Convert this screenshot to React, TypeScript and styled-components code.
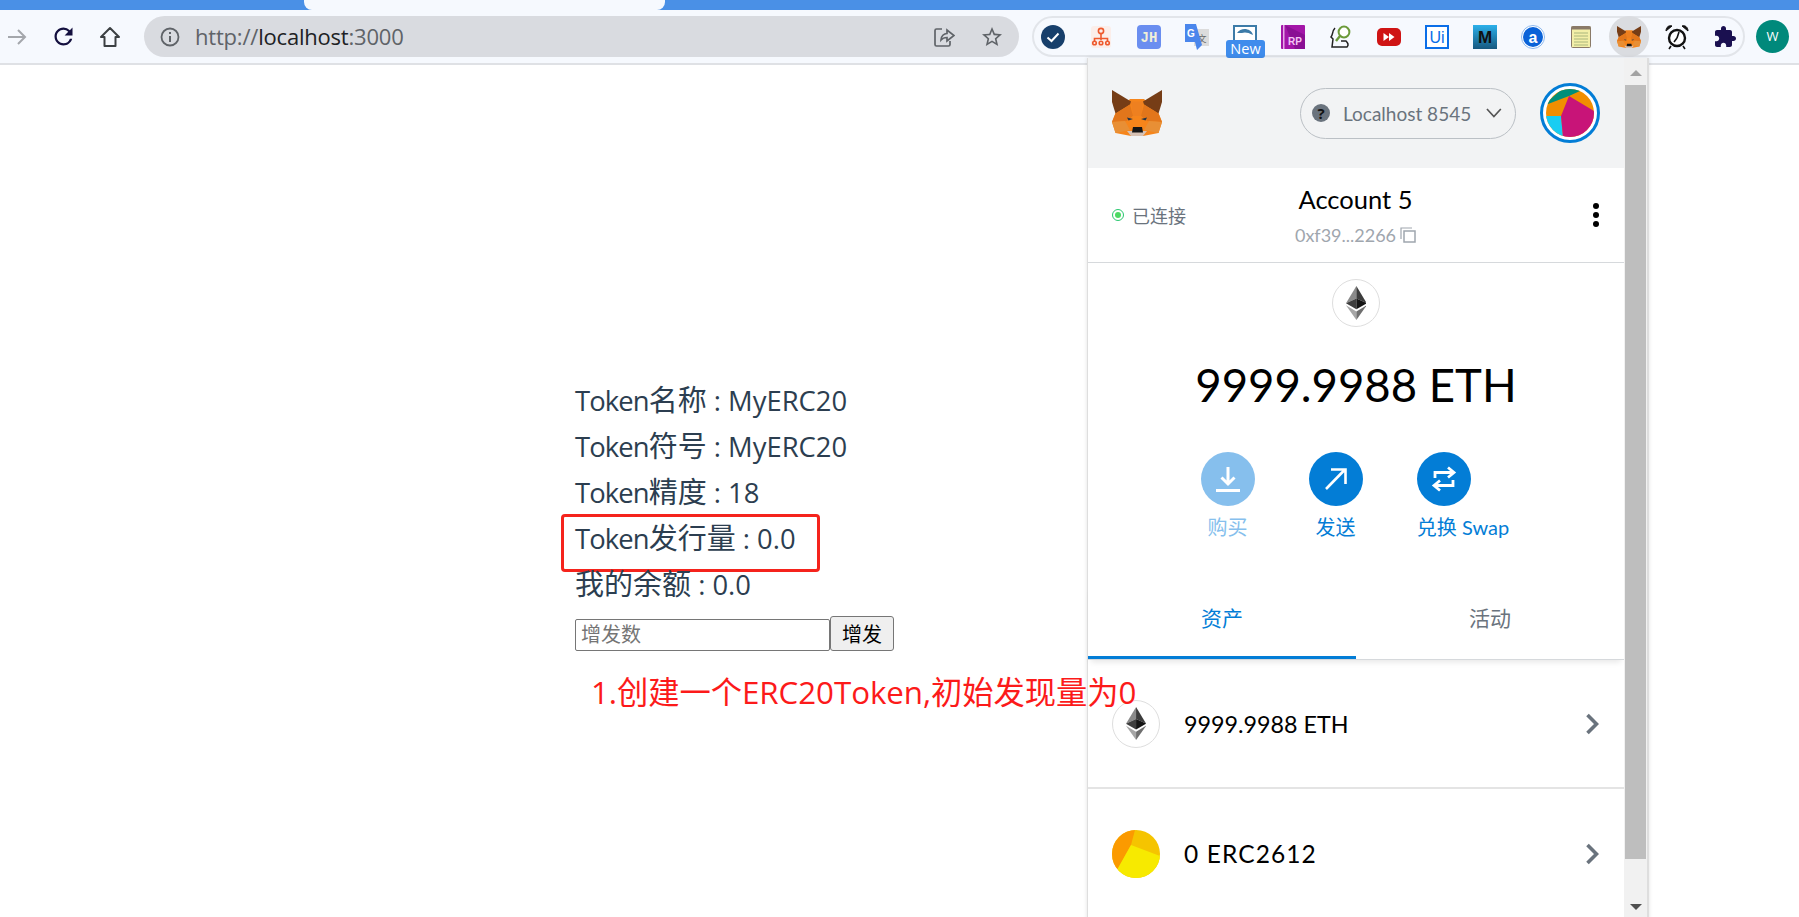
import React from "react";
import styled, { createGlobalStyle } from "styled-components";

const Global = createGlobalStyle`
  html, body { margin: 0; padding: 0; background: #fff; }
  body { width: 1799px; height: 917px; overflow: hidden; font-family: "Open Sans", "Noto Sans CJK SC", sans-serif; }
  * { box-sizing: border-box; }
`;

const cjk = `"Noto Sans CJK SC", sans-serif`;
const mmFont = `Lato, ${cjk}`;

const Page = styled.div`
  position: relative;
  width: 1799px;
  height: 917px;
  overflow: hidden;
  display: flex;
  flex-direction: column;
`;
const TabStrip = styled.div`
  height: 10px;
  background: #4a90e6;
  display: flex;
  padding-left: 304px;
  flex: none;
`;
const ActiveTab = styled.div`
  width: 361px;
  height: 10px;
  background: #f6f9fe;
  border-radius: 0 0 8px 8px;
`;
const Toolbar = styled.div`
  height: 55px;
  flex: none;
  background: #f6f9fe;
  border-bottom: 2px solid #dfe1e5;
  display: flex;
  align-items: flex-start;
  padding: 6px 0 0 0;
`;
const NavButton = styled.div<{ $w: number }>`
  width: ${(p) => p.$w}px;
  height: 41px;
  flex: none;
  display: flex;
  align-items: center;
  justify-content: center;
`;
const AddressBar = styled.div`
  width: 875px;
  height: 41px;
  margin-left: 17px;
  flex: none;
  background: #d9dbe0;
  border-radius: 21px;
  display: flex;
  align-items: center;
  padding: 0 15px 0 16px;
`;
const Url = styled.div`
  margin-left: 15px;
  padding-bottom: 2px;
  flex: 1;
  font: 22px "Open Sans", sans-serif;
  letter-spacing: -0.2px;
  color: #5f6368;
  b { font-weight: 400; color: #202124; }
`;
const BarIcon = styled.div<{ $ml?: number }>`
  margin-left: ${(p) => p.$ml ?? 0}px;
  display: flex;
`;
const ExtensionPill = styled.div`
  width: 713px;
  height: 41px;
  margin-left: 13px;
  flex: none;
  border: 2px solid #e2e5ea;
  border-radius: 21px;
  display: flex;
  align-items: center;
  gap: 24px;
  padding-left: 7px;
`;
const ExtSlot = styled.div<{ $active?: boolean }>`
  position: relative;
  width: 24px;
  height: 24px;
  flex: none;
  display: flex;
  align-items: center;
  justify-content: center;
  &::before {
    content: "";
    display: ${(p) => (p.$active ? "block" : "none")};
    position: absolute;
    left: -8px;
    top: -9px;
    width: 40px;
    height: 41px;
    border-radius: 50%;
    background: #dadce0;
  }
  svg { position: relative; }
`;
const NewBadge = styled.div`
  position: absolute;
  left: -7px;
  top: 15px;
  width: 39px;
  height: 18px;
  border-radius: 3px;
  background: #3f8cec;
  color: #fff;
  font: 14.5px/18px "Open Sans", sans-serif;
  text-align: center;
`;
const UserAvatar = styled.div`
  width: 33px;
  height: 33px;
  margin: 4px 0 0 11px;
  flex: none;
  border-radius: 50%;
  background: #00897b;
  color: #fff;
  font: 13px/33px "Open Sans", sans-serif;
  text-align: center;
`;

const Main = styled.main`
  flex: 1;
  padding: 312px 0 0 575px;
`;
const InfoLine = styled.div`
  position: relative;
  height: 46px;
  font: 27.4px/46px "Open Sans", ${cjk};
  color: #2c3e50;
  white-space: nowrap;
`;
const TokenWord = styled.span`
  letter-spacing: -0.9px;
`;
const Han = styled.span`
  font-size: 29px;
`;
const RedBox = styled.div`
  position: absolute;
  left: -14px;
  top: -1px;
  width: 259px;
  height: 58px;
  border: 3px solid #f5231c;
  border-radius: 4px;
`;
const FormRow = styled.div`
  display: flex;
  align-items: flex-end;
  margin-top: 9px;
  height: 35px;
`;
const MintInput = styled.input`
  width: 255px;
  height: 32px;
  padding: 0 5px 3px;
  border: 1px solid #767676;
  border-radius: 2px;
  background: #fff;
  font: 20px ${cjk};
  &::placeholder { color: #757575; opacity: 1; }
`;
const MintButton = styled.button`
  width: 64px;
  height: 35px;
  padding: 0;
  border: 1px solid #767676;
  border-radius: 3px;
  background: #efefef;
  color: #000;
  font: 20px ${cjk};
`;
const Annotation = styled.div`
  position: relative;
  z-index: 5;
  margin: 19px 0 0 16px;
  font: 31.3px/44px "Open Sans", ${cjk};
  letter-spacing: -0.05px;
  color: #fc1a1a;
  white-space: nowrap;
`;

const Popup = styled.aside`
  position: absolute;
  z-index: 3;
  left: 1087px;
  top: 58px;
  width: 562px;
  height: 862px;
  background: #fff;
  border-left: 1px solid #dedede;
  border-right: 2px solid #dedede;
  box-shadow: 0 0 4px rgba(0, 0, 0, 0.12);
  display: flex;
  font-family: ${mmFont};
`;
const PopupBody = styled.div`
  width: 536px;
  flex: none;
  display: flex;
  flex-direction: column;
`;
const Scrollbar = styled.div`
  flex: 1;
  background: #f1f1f1;
  display: flex;
  flex-direction: column;
  align-items: center;
  padding-top: 12px;
`;
const ScrollThumb = styled.div`
  width: 21px;
  height: 774px;
  margin: 9px 0 45px;
  background: #bebebe;
`;
const ScrollArrow = styled.div<{ $up?: boolean; $color: string }>`
  width: 0;
  height: 0;
  border-left: 6px solid transparent;
  border-right: 6px solid transparent;
  ${(p) => (p.$up ? `border-bottom: 6px solid ${p.$color};` : `border-top: 6px solid ${p.$color};`)}
`;
const AppHeader = styled.header`
  height: 110px;
  flex: none;
  background: #f2f3f4;
  display: flex;
  align-items: center;
  padding: 0 24px 0 24px;
`;
const NetworkPill = styled.div`
  width: 216px;
  height: 51px;
  margin: 0 24px 0 auto;
  border: 1px solid #bbc0c5;
  border-radius: 26px;
  display: flex;
  align-items: center;
  padding: 0 11px 0 11px;
  color: #6a737d;
  font-size: 19px;
  gap: 13px;
  span { flex: 1; white-space: nowrap; }
`;
const QuestionMark = styled.div`
  width: 18px;
  height: 18px;
  border-radius: 50%;
  background: #6a737d;
  color: #111;
  font: 700 15px/18px "Open Sans", sans-serif;
  text-align: center;
  flex: none;
`;
const IdenticonRing = styled.div`
  width: 60px;
  height: 60px;
  flex: none;
  border: 3px solid #037dd6;
  border-radius: 50%;
  padding: 3px;
  background: #fff;
  svg { display: block; border-radius: 50%; }
`;
const AccountBar = styled.div`
  height: 95px;
  flex: none;
  border-bottom: 1px solid #d6d9dc;
  display: grid;
  grid-template-columns: 1fr auto 1fr;
  align-items: center;
  padding: 0 25px 0 24px;
`;
const Connected = styled.div`
  display: flex;
  align-items: center;
  gap: 8px;
  margin-top: -1px;
  color: #6a737d;
  font: 18px ${cjk};
`;
const StatusDot = styled.div`
  width: 12px;
  height: 12px;
  border-radius: 50%;
  border: 1px solid #28c76f;
  padding: 2px;
  &::after {
    content: "";
    display: block;
    width: 6px;
    height: 6px;
    border-radius: 50%;
    background: #4cd964;
  }
`;
const AccountInfo = styled.div`
  text-align: center;
  margin-top: -1px;
`;
const AccountName = styled.div`
  font-size: 25.5px;
  line-height: 32px;
  color: #000;
`;
const AccountAddr = styled.div`
  margin-top: 9px;
  display: flex;
  align-items: center;
  justify-content: center;
  gap: 4px;
  font-size: 18px;
  color: #9fa6ae;
`;
const Kebab = styled.div`
  justify-self: end;
  display: flex;
  flex-direction: column;
  gap: 3px;
  i { display: block; width: 6px; height: 6px; border-radius: 50%; background: #000; }
`;
const Overview = styled.section`
  height: 321px;
  flex: none;
  display: flex;
  flex-direction: column;
  align-items: center;
  padding-top: 16px;
`;
const CoinBadge = styled.div<{ $plain?: boolean }>`
  width: 48px;
  height: 48px;
  flex: none;
  border-radius: 50%;
  border: ${(p) => (p.$plain ? "none" : "1px solid #dedede")};
  display: flex;
  align-items: center;
  justify-content: center;
  overflow: hidden;
  background: #fff;
`;
const Balance = styled.div`
  margin-top: 30px;
  font-size: 45.5px;
  line-height: 56px;
  color: #000;
  white-space: nowrap;
`;
const Actions = styled.div`
  display: grid;
  grid-template-columns: repeat(3, 54px);
  column-gap: 54px;
  margin: 39px 0 0 -41px;
`;
const Action = styled.div<{ $dim?: boolean }>`
  width: 54px;
  display: flex;
  flex-direction: column;
  align-items: center;
  color: ${(p) => (p.$dim ? "#86bfed" : "#037dd6")};
  font-size: 20px;
  white-space: nowrap;
`;
const ActionCircle = styled.div<{ $dim?: boolean }>`
  width: 54px;
  height: 54px;
  border-radius: 50%;
  background: ${(p) => (p.$dim ? "#86bfed" : "#037dd6")};
  display: flex;
  align-items: center;
  justify-content: center;
`;
const ActionLabel = styled.div<{ $wide?: boolean }>`
  margin-top: 8px;
  line-height: 26px;
  ${(p) => (p.$wide ? "margin-left: 39px;" : "")}
`;
const Tabs = styled.nav`
  height: 76px;
  flex: none;
  display: flex;
  border-bottom: 1px solid #d6d9dc;
  box-shadow: 0 5px 6px -3px rgba(0, 0, 0, 0.1);
`;
const TabItem = styled.div<{ $on?: boolean }>`
  flex: 1;
  height: 75px;
  text-align: center;
  font: 21px/66px ${cjk};
  color: ${(p) => (p.$on ? "#037dd6" : "#6a737d")};
  border-bottom: 3px solid ${(p) => (p.$on ? "#037dd6" : "transparent")};
`;
const AssetRow = styled.div<{ $last?: boolean }>`
  height: 129px;
  flex: none;
  display: flex;
  align-items: center;
  padding: 0 25px 0 24px;
  border-bottom: ${(p) => (p.$last ? "none" : "2px solid #e4e4e4")};
  color: #000;
`;
const AssetLabel = styled.div<{ $wide?: boolean }>`
  margin-left: 24px;
  flex: 1;
  white-space: nowrap;
  font-size: ${(p) => (p.$wide ? "24.5px" : "23.3px")};
  letter-spacing: ${(p) => (p.$wide ? "1.1px" : "0")};
`;

const Fox = ({ w, h }: { w: number; h: number }) => (
  <svg width={w} height={h} viewBox="0 0 100 92">
    <polygon points="7,46 36,18 64,18 93,46 100,64 93,86 62,92 38,92 7,86 0,64" fill="#f6851b" />
    <polygon points="0,0 38,23 36,29 7,47 0,24" fill="#763d16" />
    <polygon points="100,0 62,23 64,29 93,47 100,24" fill="#763d16" />
    <polygon points="38,23 62,23 58,52 42,52" fill="#ee8020" />
    <polygon points="7,47 36,29 42,52 30,62 0,64" fill="#e2761b" />
    <polygon points="93,47 64,29 58,52 70,62 100,64" fill="#e2761b" />
    <polygon points="0,64 26,62 36,80 7,86" fill="#e88f35" />
    <polygon points="100,64 74,62 64,80 93,86" fill="#e88f35" />
    <polygon points="30,62 42,52 58,52 70,62 62,76 38,76" fill="#f6851b" />
    <polygon points="30,82 70,82 62,92 38,92" fill="#d7c1b3" />
    <polygon points="42,74 60,74 62,85 40,85" fill="#161616" />
    <polygon points="30,55 42,58 33,61" fill="#233447" />
    <polygon points="70,55 58,58 67,61" fill="#233447" />
  </svg>
);

const Eth = ({ h }: { h: number }) => (
  <svg width={(h * 22) / 36} height={h} viewBox="0 0 22 36">
    <polygon points="11,0 0,18.2 11,13.2" fill="#8a8a8a" />
    <polygon points="11,0 22,18.2 11,13.2" fill="#3c3c3c" />
    <polygon points="0,18.2 11,13.2 11,24.6" fill="#3e3e3e" />
    <polygon points="22,18.2 11,13.2 11,24.6" fill="#141414" />
    <polygon points="0,20.4 11,36 11,27" fill="#a6a6a6" />
    <polygon points="22,20.4 11,36 11,27" fill="#6f6f6f" />
  </svg>
);

const Chevron = () => (
  <svg width="14" height="22" viewBox="0 0 14 22">
    <path d="M2.5 2 L11.5 11 L2.5 20" fill="none" stroke="#6a737d" strokeWidth="3.6" />
  </svg>
);

const Check = () => (
  <svg width="24" height="24" viewBox="0 0 24 24">
    <circle cx="12" cy="12" r="12" fill="#173f6b" />
    <path d="M6.5 12.5 L10.5 16 L17.5 8.5" fill="none" stroke="#fff" strokeWidth="2" />
  </svg>
);
const OrgChart = () => (
  <svg width="24" height="24" viewBox="0 0 24 24">
    <rect x="2" y="1" width="20" height="22" rx="3" fill="#fbeeea" />
    <g fill="none" stroke="#ee5a2e" strokeWidth="1.6">
      <circle cx="12" cy="6" r="2.6" />
      <path d="M12 9 V15 M5.5 16 V13.5 H18.5 V16" />
      <circle cx="5.5" cy="18" r="1.8" />
      <circle cx="12" cy="18" r="1.8" />
      <circle cx="18.5" cy="18" r="1.8" />
    </g>
  </svg>
);
const JH = () => (
  <svg width="24" height="24" viewBox="0 0 24 24">
    <rect width="24" height="24" rx="4" fill="#6a8ef0" />
    <text x="12" y="17" textAnchor="middle" fontFamily="Liberation Mono" fontWeight="700" fontSize="14" fill="#f0f0d8">JH</text>
  </svg>
);
const Translate = () => (
  <svg width="24" height="26" viewBox="0 0 24 26">
    <rect x="9" y="5" width="15" height="17" fill="#dcdcdc" />
    <text x="17" y="18" textAnchor="middle" fontFamily="Noto Sans CJK SC" fontSize="9" fill="#666">文</text>
    <polygon points="0,0 11,0 17,21 12,26 10,18 0,18" fill="#4a86ec" />
    <text x="6" y="13" textAnchor="middle" fontFamily="Liberation Sans" fontWeight="700" fontSize="10" fill="#fff">G</text>
  </svg>
);
const Snag = () => (
  <svg width="24" height="24" viewBox="0 0 24 24">
    <rect width="24" height="24" fill="#3c7ba8" />
    <rect x="2" y="2" width="20" height="20" fill="#fff" />
    <path d="M4 8 C8 2 18 3 20 10 C15 7 11 7 9 8 Z" fill="#3c7ba8" />
  </svg>
);
const RP = () => (
  <svg width="24" height="24" viewBox="0 0 24 24">
    <rect width="24" height="24" rx="1" fill="#a316a8" />
    <rect x="2" width="1.5" height="24" fill="#e6a8e8" />
    <polygon points="4,0 24,10 24,24 14,24" fill="#8a1094" />
    <text x="14" y="20" textAnchor="middle" fontFamily="Liberation Sans" fontWeight="700" fontSize="10" fill="#f5c4f5">RP</text>
  </svg>
);
const Magnifier = () => (
  <svg width="24" height="24" viewBox="0 0 24 24">
    <path d="M6 3 C3 6 4 10 2 12 L4 14 L3 22 H18 C20 20 19 18 17 16 L12 16" fill="none" stroke="#222" strokeWidth="1.5" />
    <circle cx="15" cy="7" r="5.4" fill="#fff" stroke="#6b9a3a" strokeWidth="2" />
    <path d="M11 11 L7 16" stroke="#6b9a3a" strokeWidth="2.4" />
  </svg>
);
const RedPlay = () => (
  <svg width="24" height="24" viewBox="0 0 24 24">
    <rect y="3" width="24" height="18" rx="5" fill="#cf1414" />
    <polygon points="6.5,8 12,12 6.5,16" fill="#fff" />
    <polygon points="12,8 17.5,12 12,16" fill="#fff" />
  </svg>
);
const UiPath = () => (
  <svg width="24" height="24" viewBox="0 0 24 24">
    <rect x="1" y="1" width="22" height="22" fill="#fff" stroke="#0a6ee8" strokeWidth="2" />
    <text x="12" y="18" textAnchor="middle" fontFamily="Liberation Sans" fontSize="16" fill="#0a6ee8">Ui</text>
  </svg>
);
const MBox = () => (
  <svg width="24" height="24" viewBox="0 0 24 24">
    <defs>
      <linearGradient id="mg" x1="0" y1="0" x2="0" y2="1">
        <stop offset="0" stopColor="#2bb0ea" />
        <stop offset="1" stopColor="#17587f" />
      </linearGradient>
    </defs>
    <rect width="24" height="24" fill="url(#mg)" />
    <text x="12" y="18" textAnchor="middle" fontFamily="Liberation Sans" fontWeight="700" fontSize="17" fill="#111">M</text>
  </svg>
);
const ACircle = () => (
  <svg width="24" height="24" viewBox="0 0 24 24">
    <circle cx="12" cy="12" r="11.5" fill="#fff" stroke="#8cb8ee" strokeWidth="1" />
    <circle cx="12" cy="12" r="10" fill="#0a62d8" />
    <text x="12" y="17.5" textAnchor="middle" fontFamily="Liberation Sans" fontWeight="700" fontSize="16" fill="#fff">a</text>
  </svg>
);
const Notepad = () => (
  <svg width="20" height="22" viewBox="0 0 20 22">
    <rect x="0.5" y="0.5" width="19" height="21" rx="1" fill="#f3efa8" stroke="#8a7a68" />
    <rect x="0.5" y="0.5" width="19" height="3" fill="#8a7a68" />
    <path d="M3 7 H17 M3 10 H17 M3 13 H17 M3 16 H17 M3 19 H17" stroke="#a9b67d" strokeWidth="1" />
  </svg>
);
const Alarm = () => (
  <svg width="24" height="26" viewBox="0 0 24 26">
    <circle cx="12" cy="14" r="8" fill="#fff" stroke="#111" strokeWidth="2.4" />
    <path d="M1 7 C1 3 4 1 7 2 Z M23 7 C23 3 20 1 17 2 Z" fill="#111" stroke="#111" />
    <path d="M12 14 L14 8 M12 14 L9 18 M6 22 L4 25 M18 22 L20 25" stroke="#111" strokeWidth="1.6" />
  </svg>
);
const Puzzle = () => (
  <svg width="24" height="24" viewBox="0 0 24 24">
    <path
      fill="#1a1050"
      d="M20.5 11H19V7c0-1.1-.9-2-2-2h-4V3.5C13 2.12 11.88 1 10.5 1S8 2.12 8 3.5V5H4c-1.1 0-1.99.9-1.99 2v3.8H3.5c1.49 0 2.7 1.21 2.7 2.7s-1.21 2.7-2.7 2.7H2V20c0 1.1.9 2 2 2h3.8v-1.5c0-1.49 1.21-2.7 2.7-2.7 1.49 0 2.7 1.21 2.7 2.7V22H17c1.1 0 2-.9 2-2v-4h1.5c1.38 0 2.5-1.12 2.5-2.5S21.88 11 20.5 11z"
    />
  </svg>
);

export default function App() {
  return (
    <Page>
      <Global />
      <TabStrip>
        <ActiveTab />
      </TabStrip>
      <Toolbar>
        <NavButton $w={33}>
          <svg width="22" height="22" viewBox="0 0 22 22">
            <path d="M2 11 H19 M12 4 L19 11 L12 18" fill="none" stroke="#a4a7ac" strokeWidth="2" />
          </svg>
        </NavButton>
        <NavButton $w={60}>
          <svg width="27" height="27" viewBox="0 0 24 24">
            <path
              fill="#14103f"
              d="M17.65 6.35A7.958 7.958 0 0 0 12 4c-4.42 0-7.99 3.58-7.99 8s3.57 8 7.99 8c3.73 0 6.84-2.55 7.73-6h-2.08A5.99 5.99 0 0 1 12 18c-3.31 0-6-2.69-6-6s2.69-6 6-6c1.66 0 3.14.69 4.22 1.78L13 11h7V4l-2.35 2.35z"
            />
          </svg>
        </NavButton>
        <NavButton $w={34}>
          <svg width="24" height="24" viewBox="0 0 24 24">
            <path d="M12 3 L3 12 H6.5 V21 H17.5 V12 H21 Z" fill="none" stroke="#3c4043" strokeWidth="2" strokeLinejoin="round" />
          </svg>
        </NavButton>
        <AddressBar>
          <svg width="20" height="20" viewBox="0 0 20 20">
            <circle cx="10" cy="10" r="8.5" fill="none" stroke="#5f6368" strokeWidth="1.8" />
            <path d="M10 9 V15 M10 5 V7" stroke="#5f6368" strokeWidth="2" />
          </svg>
          <Url>
            http://<b>localhost</b>:3000
          </Url>
          <BarIcon>
            <svg width="22" height="22" viewBox="0 0 22 22">
              <path
                d="M9 3 H3.5 A1.5 1.5 0 0 0 2 4.5 V18.5 A1.5 1.5 0 0 0 3.5 20 H15.5 A1.5 1.5 0 0 0 17 18.5 V15 M8 14 C8 10 11 7.5 14 7.5 V4 L21 9.5 L14 15 V11.5 C11.5 11.5 9.5 12.2 8 14 Z"
                fill="none"
                stroke="#5f6368"
                strokeWidth="1.7"
              />
            </svg>
          </BarIcon>
          <BarIcon $ml={25}>
            <svg width="24" height="24" viewBox="0 0 24 24">
              <path
                fill="#5f6368"
                d="M22 9.24l-7.19-.62L12 2 9.19 8.63 2 9.24l5.46 4.73L5.82 21 12 17.27 18.18 21l-1.63-7.03L22 9.24zM12 15.4l-3.76 2.27 1-4.28-3.32-2.88 4.38-.38L12 6.1l1.71 4.04 4.38.38-3.32 2.88 1 4.28L12 15.4z"
              />
            </svg>
          </BarIcon>
        </AddressBar>
        <ExtensionPill>
          <ExtSlot><Check /></ExtSlot>
          <ExtSlot><OrgChart /></ExtSlot>
          <ExtSlot><JH /></ExtSlot>
          <ExtSlot><Translate /></ExtSlot>
          <ExtSlot>
            <Snag />
            <NewBadge>New</NewBadge>
          </ExtSlot>
          <ExtSlot><RP /></ExtSlot>
          <ExtSlot><Magnifier /></ExtSlot>
          <ExtSlot><RedPlay /></ExtSlot>
          <ExtSlot><UiPath /></ExtSlot>
          <ExtSlot><MBox /></ExtSlot>
          <ExtSlot><ACircle /></ExtSlot>
          <ExtSlot><Notepad /></ExtSlot>
          <ExtSlot $active><Fox w={26} h={24} /></ExtSlot>
          <ExtSlot><Alarm /></ExtSlot>
          <ExtSlot><Puzzle /></ExtSlot>
        </ExtensionPill>
        <UserAvatar>W</UserAvatar>
      </Toolbar>

      <Main>
        <InfoLine><TokenWord>Token</TokenWord><Han>名称</Han> : MyERC20</InfoLine>
        <InfoLine><TokenWord>Token</TokenWord><Han>符号</Han> : MyERC20</InfoLine>
        <InfoLine><TokenWord>Token</TokenWord><Han>精度</Han> : 18</InfoLine>
        <InfoLine>
          <TokenWord>Token</TokenWord><Han>发行量</Han> : 0.0
          <RedBox />
        </InfoLine>
        <InfoLine><Han>我的余额</Han> : 0.0</InfoLine>
        <FormRow>
          <MintInput placeholder="增发数" />
          <MintButton>增发</MintButton>
        </FormRow>
        <Annotation>1.创建一个ERC20Token,初始发现量为0</Annotation>
      </Main>

      <Popup>
        <PopupBody>
          <AppHeader>
            <Fox w={50} h={46} />
            <NetworkPill>
              <QuestionMark>?</QuestionMark>
              <span>Localhost 8545</span>
              <svg width="20" height="12" viewBox="0 0 20 12">
                <path d="M3 2 L10 9.5 L17 2" fill="none" stroke="#555" strokeWidth="1.7" />
              </svg>
            </NetworkPill>
            <IdenticonRing>
              <svg width="48" height="48" viewBox="0 0 48 48">
                <rect width="48" height="48" fill="#f18e00" />
                <polygon points="0,14 16,0 36,0 34,2 23,7 2,15" fill="#008f7a" />
                <polygon points="0,27 15,27 17,48 0,48" fill="#18cdf2" />
                <polygon points="23,7 48,22 48,48 17,48 15,27" fill="#c81478" />
              </svg>
            </IdenticonRing>
          </AppHeader>
          <AccountBar>
            <Connected>
              <StatusDot />
              已连接
            </Connected>
            <AccountInfo>
              <AccountName>Account 5</AccountName>
              <AccountAddr>
                0xf39...2266
                <svg width="16" height="16" viewBox="0 0 16 16">
                  <path d="M1 12 V1 H12" fill="none" stroke="#9fa6ae" strokeWidth="1.2" />
                  <rect x="4" y="4" width="11" height="11" fill="none" stroke="#9fa6ae" strokeWidth="1.5" />
                </svg>
              </AccountAddr>
            </AccountInfo>
            <Kebab>
              <i />
              <i />
              <i />
            </Kebab>
          </AccountBar>
          <Overview>
            <CoinBadge>
              <Eth h={34} />
            </CoinBadge>
            <Balance>9999.9988 ETH</Balance>
            <Actions>
              <Action $dim>
                <ActionCircle $dim>
                  <svg width="28" height="28" viewBox="0 0 28 28">
                    <path d="M14 2 V19 M7.5 12.5 L14 19 L20.5 12.5 M2 25.5 H26" fill="none" stroke="#fff" strokeWidth="3" />
                  </svg>
                </ActionCircle>
                <ActionLabel>购买</ActionLabel>
              </Action>
              <Action>
                <ActionCircle>
                  <svg width="24" height="24" viewBox="0 0 24 24">
                    <path d="M2 22 L21 2.5 M7 2.5 H21.5 V17" fill="none" stroke="#fff" strokeWidth="2.6" />
                  </svg>
                </ActionCircle>
                <ActionLabel>发送</ActionLabel>
              </Action>
              <Action>
                <ActionCircle>
                  <svg width="26" height="26" viewBox="0 0 26 26">
                    <path d="M4 12 V6.5 H22 M17 1.5 L23 6.5 L17 11.5 M22 14 V19.5 H4 M9 14.5 L3 19.5 L9 24.5" fill="none" stroke="#fff" strokeWidth="2.8" />
                  </svg>
                </ActionCircle>
                <ActionLabel $wide>兑换 Swap</ActionLabel>
              </Action>
            </Actions>
          </Overview>
          <Tabs>
            <TabItem $on>资产</TabItem>
            <TabItem>活动</TabItem>
          </Tabs>
          <AssetRow>
            <CoinBadge>
              <Eth h={33} />
            </CoinBadge>
            <AssetLabel>9999.9988 ETH</AssetLabel>
            <Chevron />
          </AssetRow>
          <AssetRow $last>
            <CoinBadge $plain>
              <svg width="48" height="48" viewBox="0 0 48 48">
                <rect width="48" height="48" fill="#f5c400" />
                <polygon points="0,0 23,0 19,15 5,40 0,48" fill="#fb9a00" />
                <polygon points="19,15 48,26 48,48 0,48 5,40" fill="#f7ea00" />
              </svg>
            </CoinBadge>
            <AssetLabel $wide>0 ERC2612</AssetLabel>
            <Chevron />
          </AssetRow>
        </PopupBody>
        <Scrollbar>
          <ScrollArrow $up $color="#a3a3a3" />
          <ScrollThumb />
          <ScrollArrow $color="#505050" />
        </Scrollbar>
      </Popup>
    </Page>
  );
}
